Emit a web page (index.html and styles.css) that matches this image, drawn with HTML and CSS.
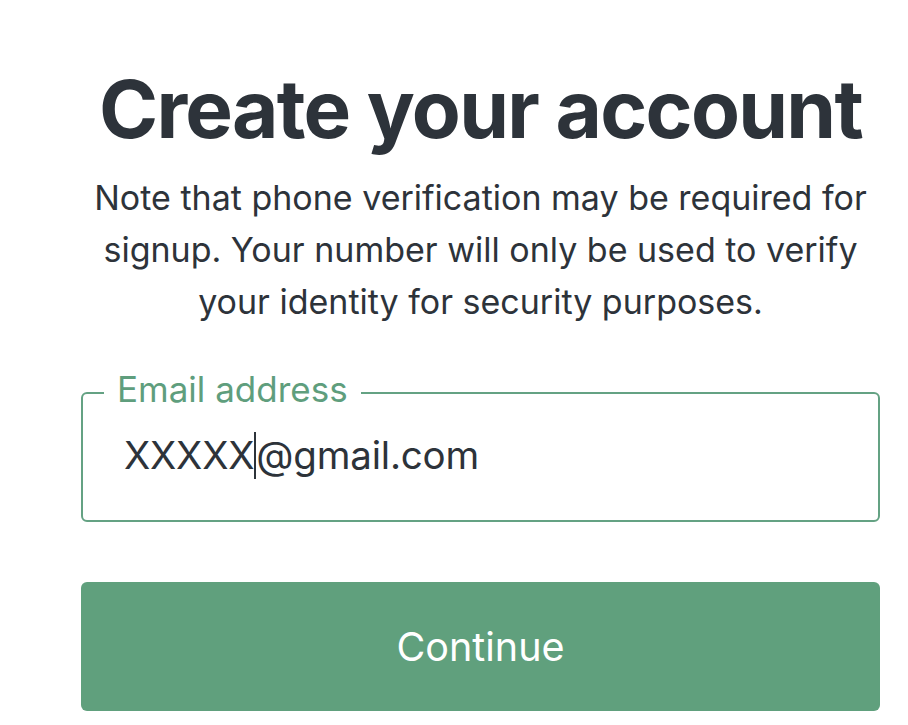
FILE: index.html
```html
<!DOCTYPE html>
<html lang="en">
<head>
<meta charset="utf-8">
<title>Create your account</title>
<link rel="stylesheet" href="styles.css">
</head>
<body>
<main class="page">
  <section class="card">
    <h1 class="title">Create your account</h1>
    <p class="note">Note that phone verification may be required for signup. Your number will only be used to verify your identity for security purposes.</p>
    <form class="form">
      <fieldset class="field">
        <legend class="field-label">Email address</legend>
        <div class="field-value"><span>XXXXX</span><span class="caret"></span><span>@gmail.com</span></div>
      </fieldset>
      <button type="button" class="btn">Continue</button>
    </form>
  </section>
</main>
</body>
</html>
```
FILE: styles.css
```css
html, body {
  margin: 0;
  padding: 0;
  background: #ffffff;
}
body {
  font-family: "Inter", "Roboto", "Liberation Sans", sans-serif;
  color: #2d333a;
}
.page {
  padding-left: 81px;
  padding-top: 61px;
}
.card {
  width: 799px;
  display: flex;
  flex-direction: column;
  align-items: stretch;
}
.title {
  margin: 0;
  text-align: center;
  font-size: 80px;
  line-height: 96px;
  font-weight: 700;
  letter-spacing: -1.7px;
  color: #2d333a;
}
.note {
  margin: 15px 0 0;
  text-align: center;
  font-size: 34px;
  line-height: 52px;
  font-weight: 400;
  color: #2d333a;
}
.form {
  margin-top: 43px;
  display: flex;
  flex-direction: column;
}
.field {
  margin: 0;
  border: 2px solid #64a283;
  border-radius: 6px;
  padding: 0 0 0 21px;
  height: 151px;
  box-sizing: border-box;
}
.field-label {
  padding: 0 13px 8px;
  font-size: 35px;
  line-height: 36px;
  color: #5f9e7d;
}
.field-value {
  margin-top: 15px;
  margin-left: 20px;
  font-size: 38.5px;
  letter-spacing: -0.2px;
  line-height: 48px;
  color: #2d333a;
  display: flex;
  align-items: center;
}
.caret {
  display: inline-block;
  width: 2px;
  height: 47px;
  margin-top: 2px;
  background: #2d333a;
}
.btn {
  margin-top: 60px;
  height: 129px;
  border: none;
  border-radius: 6px;
  background: #60a07d;
  color: #ffffff;
  font-family: inherit;
  font-size: 39.5px;
  font-weight: 400;
  cursor: pointer;
}
```
